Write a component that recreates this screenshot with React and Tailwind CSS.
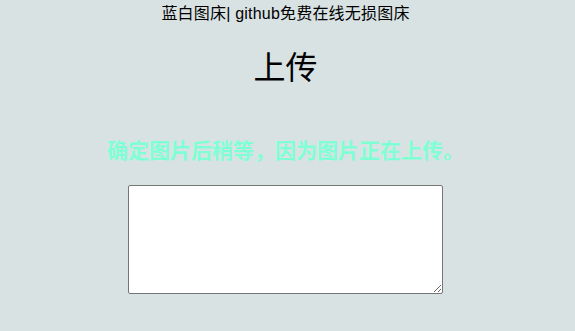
export default function App() {
  return (
    <div
      className="min-h-[331px] w-full bg-[#d9e2e3] flex flex-col items-center pr-[4px] text-black"
      style={{ fontFamily: '"Liberation Sans", "Noto Sans CJK SC", sans-serif' }}
    >
      <div className="mt-[4px] h-[20px] text-[16px] leading-[20px] tracking-[0.2px]">蓝白图床| github免费在线无损图床</div>
      <h1 className="mt-[26px] h-[36px] text-[32px] leading-[36px] font-normal">上传</h1>
      <p className="mt-[53px] h-[24px] text-[21px] leading-[24px] font-bold text-[#7fffd4]">
        确定图片后稍等，因为图片正在上传。
      </p>
      <textarea className="mt-[22px] w-[315px] h-[109px] bg-white border border-[#767676] rounded-[2px] resize" />
    </div>
  );
}
